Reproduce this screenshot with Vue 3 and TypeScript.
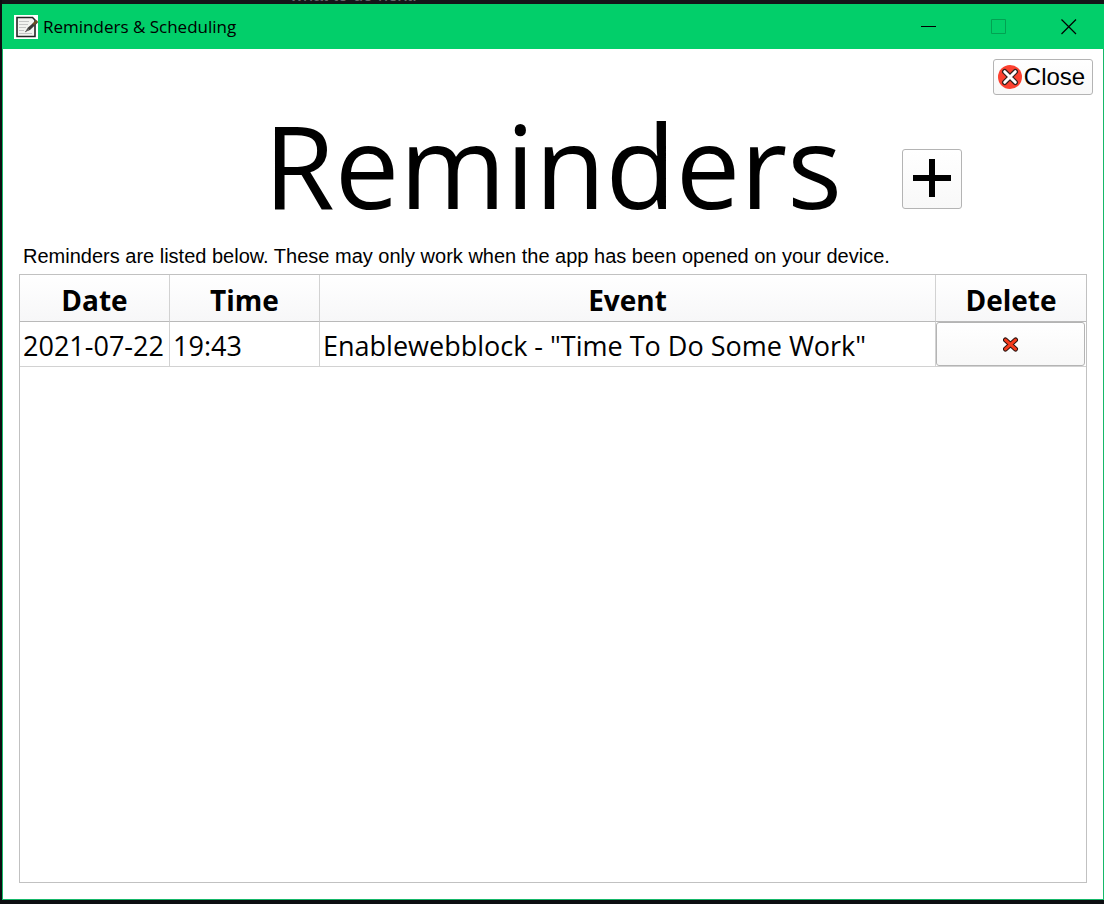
<script setup lang="ts">
import { ref } from 'vue'

interface Reminder {
  id: number
  date: string
  time: string
  event: string
}

const reminders = ref<Reminder[]>([
  { id: 1, date: '2021-07-22', time: '19:43', event: 'Enablewebblock - "Time To Do Some Work"' },
])

function remove(id: number) {
  reminders.value = reminders.value.filter((r) => r.id !== id)
}
</script>

<template>
  <div class="desktop">
    <div class="behind"><span>what to do next.</span></div>
    <div class="window">
      <header class="titlebar">
        <svg class="app-icon" viewBox="0 0 24 24" aria-hidden="true">
          <rect width="24" height="24" fill="#fff" />
          <path d="M3 2.5H18.5L21 5V21.5H3Z" fill="#f2f2f0" stroke="#252525" stroke-width="1.6" />
          <path d="M5 6.5H15M5 9.5H14M5 12.5H12M5 15.5H10M5 18.5H18" stroke="#c4c4c4" stroke-width="1" />
          <path d="M11 17L14 12.5L22 5.5L24 7.5L16 15Z" fill="#3b3a38" />
          <path d="M18.5 8.5L22.5 5L24 6.5L20 10.2Z" fill="#715022" />
          <path d="M11 17L15 14" stroke="#777" stroke-width="1" />
        </svg>
        <span class="caption">Reminders &amp; Scheduling</span>
        <div class="controls">
          <button type="button" aria-label="Minimize">
            <svg viewBox="0 0 16 16"><path d="M0 7.5H15" stroke="#000" fill="none" /></svg>
          </button>
          <button type="button" aria-label="Maximize" disabled>
            <svg viewBox="0 0 16 16"><path d="M.5 .5H14.5V14.5H.5Z" stroke="#02a252" fill="none" /></svg>
          </button>
          <button type="button" aria-label="Close window">
            <svg viewBox="0 0 16 16"><path d="M.5 .5L15 15M15 .5L.5 15" stroke="#000" stroke-width="1.2" fill="none" /></svg>
          </button>
        </div>
      </header>

      <main class="content">
        <div class="toolbar">
          <button type="button" class="push close">
            <svg viewBox="0 0 24 24" aria-hidden="true">
              <circle cx="12" cy="12" r="12" fill="#fc4130" />
              <path d="M6.7 6.7L17.3 17.3M17.3 6.7L6.7 17.3" stroke="#33201c" stroke-width="5.4" stroke-linecap="round" />
              <path d="M6.7 6.7L17.3 17.3M17.3 6.7L6.7 17.3" stroke="#fff" stroke-width="3" stroke-linecap="round" />
            </svg>
            <span>Close</span>
          </button>
        </div>

        <div class="heading">
          <h1>Reminders</h1>
          <button type="button" class="push add" aria-label="Add reminder">
            <svg viewBox="0 0 40 40"><path d="M1 19H39M20 0V38" stroke="#000" stroke-width="6" /></svg>
          </button>
        </div>

        <p class="note">Reminders are listed below. These may only work when the app has been opened on your device.</p>

        <div class="list">
          <table>
            <thead>
              <tr>
                <th class="narrow" scope="col">Date</th>
                <th class="narrow" scope="col">Time</th>
                <th scope="col">Event</th>
                <th class="narrow" scope="col">Delete</th>
              </tr>
            </thead>
            <tbody>
              <tr v-for="r in reminders" :key="r.id">
                <td>{{ r.date }}</td>
                <td>{{ r.time }}</td>
                <td>{{ r.event }}</td>
                <td class="action">
                  <button type="button" class="push delete" aria-label="Delete reminder" @click="remove(r.id)">
                    <svg viewBox="0 0 16 16">
                      <path d="M2.4 3.9L12.6 13.1M12.6 3.9L2.4 13.1" stroke="#2c1510" stroke-width="4.8" stroke-linecap="round" />
                      <path d="M2.4 3.9L12.6 13.1M12.6 3.9L2.4 13.1" stroke="#f53b1c" stroke-width="2.8" stroke-linecap="round" />
                    </svg>
                  </button>
                </td>
              </tr>
            </tbody>
          </table>
        </div>
      </main>
    </div>
  </div>
</template>

<style>
body {
  margin: 0;
  background: #0b0b0e;
}
</style>

<style scoped>
* {
  box-sizing: border-box;
}

.desktop {
  display: flex;
  flex-direction: column;
  min-height: 100vh;
  padding: 0 0 4px 2px;
  background: #0d0e11;
  color: #000;
}

.behind {
  display: flex;
  align-items: flex-end;
  height: 4px;
  padding-left: 288px;
  overflow: hidden;
  background: #141518;
  color: #66676a;
  font: 18px/18px "Liberation Sans", Arial, sans-serif;
}

.window {
  display: flex;
  flex: 1;
  flex-direction: column;
  border: 1px solid #16b869;
  border-top: 0;
  background: #fff;
}

.titlebar {
  display: flex;
  align-items: center;
  height: 45px;
  margin: 0 -1px;
  padding-left: 12px;
  background: #02cf6a;
}

.app-icon {
  width: 24px;
  height: 24px;
}

.caption {
  padding-left: 5px;
  font: 17px/24px "Open Sans", "Segoe UI", sans-serif;
}

.controls {
  display: flex;
  align-self: stretch;
  margin-left: auto;
}

.controls button {
  display: grid;
  place-items: center;
  width: 70px;
  padding: 0;
  border: 0;
  background: none;
}

.controls svg {
  width: 16px;
  height: 16px;
}

.content {
  display: flex;
  flex: 1;
  flex-direction: column;
  padding: 10px 16px 16px;
}

.push {
  display: flex;
  align-items: center;
  justify-content: center;
  padding: 0;
  border: 1px solid #b4b4b4;
  border-radius: 3px;
  background: linear-gradient(#fff, #f8f8f8);
  color: #000;
}

.toolbar {
  display: flex;
  justify-content: flex-end;
  margin-right: -6px;
}

.close {
  width: 100px;
  height: 36px;
  gap: 2px;
  padding-right: 3px;
  font: 24px/28px "Liberation Sans", Arial, sans-serif;
}

.close svg {
  width: 24px;
  height: 24px;
}

.heading {
  display: flex;
  align-items: flex-start;
  justify-content: center;
  gap: 60px;
  height: 149px;
  padding-left: 120px;
}

h1 {
  margin: 0;
  font: 400 115px/140px "Open Sans", "Noto Sans", sans-serif;
}

.add {
  width: 60px;
  height: 60px;
  margin-top: 54px;
}

.add svg {
  width: 40px;
  height: 40px;
}

.note {
  margin: 0;
  padding: 0 4px 6px;
  font: 20px/24px "Liberation Sans", Arial, sans-serif;
}

.list {
  flex: 1;
  border: 1px solid #c1c1c1;
}

table {
  width: 100%;
  border-collapse: separate;
  border-spacing: 0;
  table-layout: fixed;
  font: 27px/32px "Open Sans", "Segoe UI", sans-serif;
}

th {
  height: 47px;
  padding: 4px 0 0;
  border-right: 1px solid #d2d2d2;
  border-bottom: 1px solid #b9b9b9;
  background: linear-gradient(#fff, #f7f7f8);
  font-size: 28px;
  font-weight: 700;
}

.narrow {
  width: 150px;
}

td {
  height: 45px;
  padding: 4px 0 0 3px;
  border-right: 1px solid #d2d2d2;
  border-bottom: 1px solid #d2d2d2;
  white-space: nowrap;
}

th:last-child,
td:last-child {
  border-right: 0;
}

.action {
  padding: 0;
}

.delete {
  width: 149px;
  height: 44px;
}

.delete svg {
  width: 16px;
  height: 16px;
}
</style>
